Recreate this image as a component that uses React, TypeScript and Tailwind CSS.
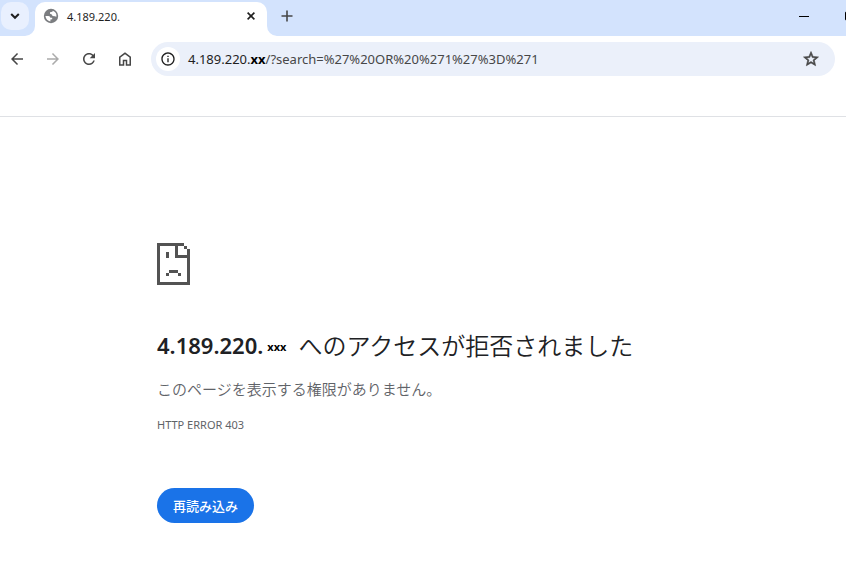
import { useState } from "react";

const PAGE_URL = "4.189.220.xx/?search=%27%20OR%20%271%27%3D%271";

const UI_FONT = "font-['Noto_Sans','Noto_Sans_CJK_JP',sans-serif]";

// sad page drawing, one character per square
const SAD_PAGE = [
  "#########..",
  "#.....#..#.",
  "#.....#...#",
  "#..#..#...#",
  "#..#..#####",
  "#.........#",
  "#.........#",
  "#.........#",
  "#.........#",
  "#...###...#",
  "#..#...#..#",
  "#.........#",
  "#.........#",
  "###########",
];

function SadPage() {
  return (
    <svg width="33" height="42" viewBox="0 0 11 14" shapeRendering="crispEdges" fill="#535353" aria-hidden="true">
      {SAD_PAGE.map((row, y) =>
        row.split("").map((cell, x) =>
          cell === "#" ? <rect key={`${x}-${y}`} x={x} y={y} width="1" height="1" /> : null
        )
      )}
    </svg>
  );
}

function Globe() {
  return (
    <svg width="16" height="16" viewBox="0 0 16 16" aria-hidden="true">
      <circle cx="8" cy="8" r="7.2" fill="#7b7d80" />
      <path d="M2.400 8H5.400Q7.200 8.200 7.400 9.800H9.200V11.200L7.400 11.600V13.400Q3.200 12.800 2.400 8Z" fill="#fff" />
      <path d="M9.800 2.700 9.400 3.800 7 4.200V5.800L8.800 6.400 9.600 8 11.800 8.200 13.400 8.800Q14 4.400 9.800 2.700Z" fill="#fff" />
    </svg>
  );
}

function MaterialIcon({ d, size = 18, weight = 0 }: { d: string; size?: number; weight?: number }) {
  return (
    <svg
      className="shrink-0"
      width={size}
      height={size}
      viewBox="0 0 24 24"
      fill="currentColor"
      stroke={weight ? "currentColor" : "none"}
      strokeWidth={weight}
      aria-hidden="true"
    >
      <path d={d} />
    </svg>
  );
}

const ICONS = {
  back: "M20 11H7.83l5.59-5.59L12 4l-8 8 8 8 1.41-1.41L7.83 13H20v-2z",
  forward: "M12 4l-1.41 1.41L16.17 11H4v2h12.170l-5.580 5.590L12 20l8-8z",
  reload:
    "M17.650 6.350C16.200 4.900 14.210 4 12 4c-4.420 0-7.990 3.580-7.990 8s3.570 8 7.990 8c3.730 0 6.840-2.550 7.730-6h-2.080c-.820 2.330-3.040 4-5.650 4-3.310 0-6-2.690-6-6s2.690-6 6-6c1.660 0 3.140.690 4.220 1.780L13 11h7V4l-2.350 2.350z",
  home: "M6 19h3v-6h6v6h3v-9l-6-4.500L6 10v9zm-2 2V9l8-6 8 6v12h-7v-6h-2v6H4z",
  info: "M11 7h2v2h-2zm0 4h2v6h-2zm1-9C6.480 2 2 6.480 2 12s4.480 10 10 10 10-4.480 10-10S17.520 2 12 2zm0 18c-4.410 0-8-3.590-8-8s3.590-8 8-8 8 3.590 8 8-3.590 8-8 8z",
  star: "M22 9.240l-7.190-.620L12 2 9.190 8.630 2 9.240l5.460 4.730L5.820 21 12 17.270 18.180 21l-1.630-7.030L22 9.240zM12 15.400l-3.760 2.270 1-4.280-3.320-2.880 4.380-.380L12 6.100l1.710 4.040 4.380.380-3.320 2.880 1 4.280L12 15.400z",
};

function TabStrip() {
  return (
    <div className="flex h-9 items-start bg-[#d3e3fd]">
      <button
        aria-label="Search tabs"
        className="mt-0.5 ml-px flex size-7 shrink-0 items-center justify-center rounded-[10px] bg-[#e9f0fe] text-[#1f1f1f]"
      >
        <svg width="10" height="10" viewBox="0 0 10 10" fill="none" stroke="currentColor" strokeWidth="2" aria-hidden="true">
          <path d="M1.200 3 5 6.800 8.800 3" />
        </svg>
      </button>

      <div className="flex items-end self-stretch pt-0.5">
        <svg className="-ml-1" width="10" height="10" viewBox="0 0 10 10" fill="#fff" aria-hidden="true">
          <path d="M10 0v10H0A10 10 0 0 0 10 0z" />
        </svg>
        <div className="flex h-full w-[232px] items-start rounded-t-[10px] bg-white pt-1.5 pr-2 pl-2">
          <Globe />
          <span className="ml-2 flex-1 text-[11px] leading-[18px] text-[#1f1f1f]">4.189.220.</span>
          <button aria-label="Close tab" className="flex size-4 items-center justify-center text-[#1f1f1f]">
            <svg width="8" height="8" viewBox="0 0 8 8" stroke="currentColor" strokeWidth="1.6" aria-hidden="true">
              <path d="M.6.6l6.800 6.800M7.400.6.6 7.400" />
            </svg>
          </button>
        </div>
        <svg width="10" height="10" viewBox="0 0 10 10" fill="#fff" aria-hidden="true">
          <path d="M0 0v10h10A10 10 0 0 1 0 0z" />
        </svg>
      </div>

      <button aria-label="New tab" className="mt-0.5 flex h-7 w-5 items-center justify-center text-[#474747]">
        <svg width="12" height="12" viewBox="0 0 12 12" stroke="currentColor" strokeWidth="1.6" aria-hidden="true">
          <path d="M6 .5v11M.5 6h11" />
        </svg>
      </button>

      <div className="flex-1" />

      <button aria-label="Minimize" className="flex h-8 w-[46px] items-center justify-center">
        <span className="h-px w-2.5 bg-black" />
      </button>
      <div className="w-[19px] overflow-hidden">
        <button aria-label="Maximize" className="flex h-8 w-[46px] items-center justify-center">
          <span className="size-2.5 rounded-xs border border-black" />
        </button>
      </div>
    </div>
  );
}

function Toolbar() {
  const [editing, setEditing] = useState(false);
  const [address, setAddress] = useState(PAGE_URL);

  return (
    <div className="flex items-center pt-1.5 pr-[11px] text-[#474747]">
      <div className="-ml-px flex pr-2">
        <button aria-label="Back" className="flex h-8 w-9 items-center justify-center">
          <MaterialIcon d={ICONS.back} />
        </button>
        <button aria-label="Forward" disabled className="flex h-8 w-9 items-center justify-center text-[#ababab]">
          <MaterialIcon d={ICONS.forward} />
        </button>
        <button aria-label="Reload" className="flex h-8 w-9 items-center justify-center">
          <MaterialIcon d={ICONS.reload} />
        </button>
        <button aria-label="Home" className="flex h-8 w-9 items-center justify-center">
          <MaterialIcon d={ICONS.home} />
        </button>
      </div>
      <div className="flex h-[34px] flex-1 items-center rounded-full bg-[#ebf0fa] pr-[15px] pl-[5px]">
        <button aria-label="Site information" className="flex size-6 items-center justify-center rounded-full bg-white text-[#1f1f1f]">
          <MaterialIcon d={ICONS.info} size={16} />
        </button>
        <div className="relative ml-2 h-6 flex-1 text-[13px] leading-6">
          {!editing && (
            <span className="whitespace-nowrap text-[#474747]">
              <span className="text-[#1f1f1f]">4.189.220.</span>
              <b className="font-bold text-black">xx</b>
              /?search=%27%20OR%20%271%27%3D%271
            </span>
          )}
          <input
            type="text"
            aria-label="Address and search bar"
            className="absolute inset-0 w-full bg-transparent text-[#1f1f1f] outline-none"
            value={editing ? address : ""}
            onChange={e => setAddress(e.target.value)}
            onFocus={() => setEditing(true)}
            onBlur={() => setEditing(false)}
          />
        </div>
        <button aria-label="Bookmark this page" className="flex items-center justify-center">
          <MaterialIcon d={ICONS.star} weight={0.8} />
        </button>
      </div>
    </div>
  );
}

function ErrorPage() {
  return (
    <main className="px-[157px] pt-[126px] text-[#5f6368]">
      <SadPage />
      <h1 className="mt-10 flex items-center whitespace-nowrap text-2xl leading-9 text-[#202124]">
        <span className="text-[22px] font-semibold">4.189.220.</span>
        <span className="mt-1 ml-1 text-[11px] font-bold text-black">xxx</span>
        <span className="ml-3 font-['Noto_Sans_CJK_JP',sans-serif] font-[350]">へのアクセスが拒否されました</span>
      </h1>
      <p className="mt-3 font-['Noto_Sans_CJK_JP',sans-serif] text-[15px] leading-6 font-[350]">このページを表示する権限がありません。</p>
      <p className="mt-3 text-[11px] leading-6">HTTP ERROR 403</p>
      <button
        className="mt-[51px] h-[35px] rounded-full bg-[#1a73e8] px-4 font-['Noto_Sans_CJK_JP',sans-serif] text-[13px] font-medium text-white"
        onClick={() => window.location.reload()}
      >
        再読み込み
      </button>
    </main>
  );
}

export default function App() {
  return (
    <div className={`min-h-screen bg-white ${UI_FONT}`}>
      <header className="border-b border-[#dfe1e5] pb-10">
        <TabStrip />
        <Toolbar />
      </header>
      <ErrorPage />
    </div>
  );
}
